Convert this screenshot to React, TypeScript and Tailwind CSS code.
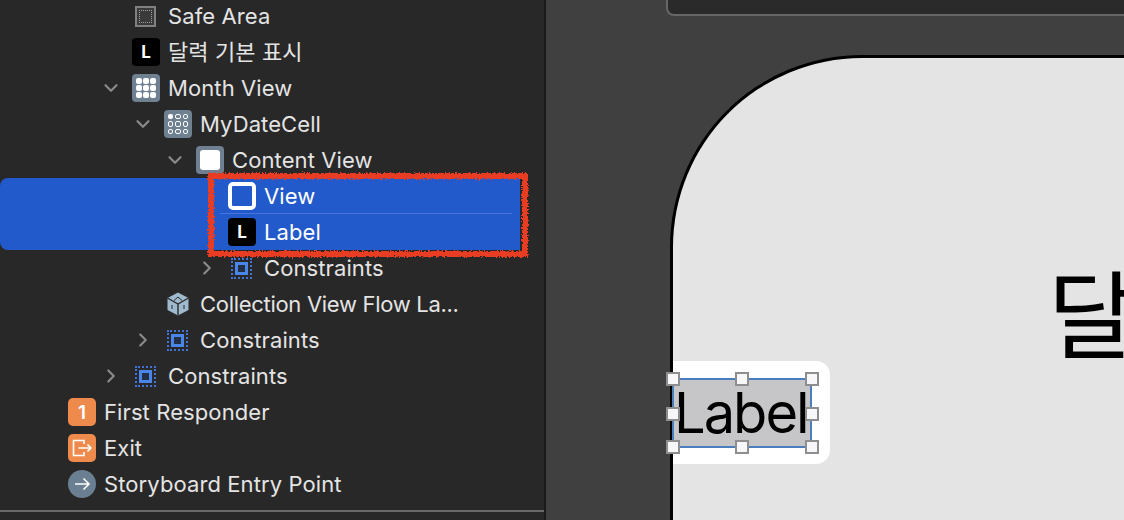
import { ChevronDown, ChevronRight } from "lucide-react";
import type { ReactNode } from "react";

const font = { fontFamily: 'Inter, "Noto Sans CJK KR", sans-serif' };

// small outline icons
const SafeAreaIcon = () => (
  <div className="w-[21px] h-[21px] mr-px border-2 border-[#808080] bg-[#3a3a3a] p-[2px]">
    <div className="w-full h-full border border-dotted border-[#a0a0a0]" />
  </div>
);

const ConstraintsIcon = () => (
  <div className="w-[21px] h-[21px] mr-[2px] border-2 border-dotted border-[#3f74d6] flex items-center justify-center">
    <div className="w-[13px] h-[13px] border-[3px] border-[#4a86ea] bg-[#222f45]" />
  </div>
);

const LabelIcon = () => (
  <div className="w-7 h-7 rounded-[4px] bg-black text-white flex items-center justify-center text-[17px] font-bold">
    L
  </div>
);

const MonthIcon = () => (
  <div className="w-7 h-7 rounded-[4px] bg-[#6f8191] p-1 grid grid-cols-3 gap-[1.5px]">
    {[0, 1, 2, 3, 4, 5, 6, 7, 8].map((i) => (
      <div key={i} className="bg-white rounded-[2px]" />
    ))}
  </div>
);

const CellIcon = () => (
  <div className="w-7 h-7 rounded-[4px] bg-[#6f8191] p-1 grid grid-cols-3 gap-[2px]">
    {[0, 1, 2, 3, 4, 5, 6, 7, 8].map((i) => (
      <div key={i} className={i < 1 ? "bg-white rounded-[2px]" : "border border-white rounded-[2px]"} />
    ))}
  </div>
);

const ContentIcon = () => (
  <div className="w-7 h-7 rounded-[4px] bg-[#6f8191] flex items-center justify-center">
    <div className="w-5 h-5 bg-white rounded-[3px]" />
  </div>
);

const ViewIcon = () => <div className="w-7 h-7 rounded-[5px] border-[4px] border-white" />;

const FlowIcon = () => (
  <svg width="24" height="24" viewBox="0 0 24 24">
    <path d="M12 0.5 22.5 6v12L12 23.5 1.5 18V6z" fill="#9fb9cd" />
    <path d="M1.5 6 12 12l10.5-6M12 12v11.5" stroke="#2a2a2a" strokeWidth="1.4" fill="none" />
    <path d="M8 8.5 12 5l4 3.5M6 13v4M18 13v4" stroke="#2a2a2a" strokeWidth="1" fill="none" />
  </svg>
);

const ResponderIcon = () => (
  <div className="w-7 h-7 rounded-[5px] bg-[#ee8b4c] text-white flex items-center justify-center text-[19px] font-semibold">
    1
  </div>
);

const ExitIcon = () => (
  <div className="w-7 h-7 rounded-[5px] bg-[#ee8b4c] flex items-center justify-center">
    <svg width="22" height="20" viewBox="0 0 22 20" fill="none" stroke="white" strokeWidth="1.6">
      <path d="M13 6V2.5H2.5v15H13V14" />
      <path d="M7.5 10H20M16.5 6.5 20 10l-3.5 3.5" />
    </svg>
  </div>
);

const EntryIcon = () => (
  <div className="w-7 h-7 rounded-full bg-[#6b7f92] flex items-center justify-center">
    <svg width="18" height="14" viewBox="0 0 18 14" fill="none" stroke="white" strokeWidth="1.6">
      <path d="M2 7h14M10.5 1.5 16 7l-5.5 5.5" />
    </svg>
  </div>
);

const Row = ({
  pad,
  toggle,
  icon,
  text,
  className,
  textClass,
}: {
  pad: string;
  toggle?: "open" | "closed";
  icon: ReactNode;
  text: string;
  className?: string;
  textClass?: string;
}) => (
  <div className={`flex items-center shrink-0 ${className ?? "h-9"} ${pad}`}>
    <div className="w-8 flex items-center justify-center text-[#8a8a8a] pr-[10px]">
      {toggle === "open" && <ChevronDown size={28} strokeWidth={2.4} />}
      {toggle === "closed" && <ChevronRight size={28} strokeWidth={2.4} />}
    </div>
    <div className="w-7 h-7 flex items-center justify-center shrink-0">{icon}</div>
    <span className={`ml-2 whitespace-nowrap ${textClass ?? ""}`}>{text}</span>
  </div>
);

const Outline = () => (
  <div className="w-[544px] shrink-0 h-full bg-[#282828] relative overflow-hidden flex flex-col text-[22px] leading-none text-[#e4e4e4] tracking-[0.1px]">
    <div className="-mt-[2px]" />
    <Row pad="pl-[100px]" icon={<SafeAreaIcon />} text="Safe Area" />
    <Row pad="pl-[100px]" icon={<LabelIcon />} text="달력 기본 표시" />
    <Row pad="pl-[100px]" toggle="open" icon={<MonthIcon />} text="Month View" />
    <Row pad="pl-[132px]" toggle="open" icon={<CellIcon />} text="MyDateCell" />
    <Row pad="pl-[164px]" toggle="open" icon={<ContentIcon />} text="Content View" />
    <div className="w-[520px] h-[72px] shrink-0 bg-[#2259cb] rounded-l-lg text-white flex flex-col">
      <Row pad="pl-[196px]" className="h-[35px]" icon={<ViewIcon />} text="View" />
      <div className="h-px ml-[220px] w-[292px] bg-[#4a72dc]" />
      <Row pad="pl-[196px]" icon={<LabelIcon />} text="Label" />
    </div>
    <Row pad="pl-[196px]" toggle="closed" icon={<ConstraintsIcon />} text="Constraints" />
    <Row
      pad="pl-[132px]"
      icon={<FlowIcon />}
      text="Collection View Flow La..."
      textClass="tracking-[-0.3px]"
    />
    <Row pad="pl-[132px]" toggle="closed" icon={<ConstraintsIcon />} text="Constraints" />
    <Row pad="pl-[100px]" toggle="closed" icon={<ConstraintsIcon />} text="Constraints" />
    <Row pad="pl-9" icon={<ResponderIcon />} text="First Responder" />
    <Row pad="pl-9" icon={<ExitIcon />} text="Exit" />
    <Row pad="pl-9" icon={<EntryIcon />} text="Storyboard Entry Point" />
    <div className="mt-[8px] h-[2px] bg-[#6a6a6a]" />
  </div>
);

// hand drawn red annotation around the selected rows
const Annotation = () => (
  <svg className="absolute left-[204px] top-[168px]" width="328" height="94" viewBox="0 0 328 94">
    <defs>
      <filter id="rough" x="-5%" y="-10%" width="110%" height="120%">
        <feTurbulence type="fractalNoise" baseFrequency="0.6" numOctaves="2" seed="4" />
        <feDisplacementMap in="SourceGraphic" scale="5" />
      </filter>
    </defs>
    <rect x="7" y="8" width="314" height="78" fill="none" stroke="#e83c20" strokeWidth="6" filter="url(#rough)" />
  </svg>
);

const Handle = ({ pos }: { pos: string }) => (
  <div className={`absolute w-[14px] h-[14px] bg-[#f7f7f9] border-2 border-[#8e8e8e] ${pos}`} />
);

const Canvas = () => (
  <div className="flex-1 h-full bg-[#404040] border-l-2 border-[#1b1b1b] flex flex-col overflow-hidden">
    <div className="ml-[120px] h-[16px] shrink-0 bg-[#2a2a2a] border-l-2 border-b-2 border-[#666666] rounded-bl-[8px]" />
    <div className="mt-[39px] ml-[124px] flex-1 relative bg-[#e4e4e4] border-l-[3px] border-t-[3px] border-black rounded-tl-[192px] pt-[303px]">
      <div className="w-[157px] h-[103px] bg-white rounded-r-[14px] pt-[17px]">
        <div className="relative -ml-px w-[140px] h-[70px] bg-[#c6c6c8] border-2 border-[#4a7fbd] flex items-center text-[56px] leading-none text-black tracking-[-2px]">
          Label
          <Handle pos="-left-[8px] -top-[8px]" />
          <Handle pos="left-[61px] -top-[8px]" />
          <Handle pos="-right-[9px] -top-[8px]" />
          <Handle pos="-left-[8px] top-[27px]" />
          <Handle pos="-right-[9px] top-[27px]" />
          <Handle pos="-left-[8px] -bottom-[8px]" />
          <Handle pos="left-[61px] -bottom-[8px]" />
          <Handle pos="-right-[9px] -bottom-[8px]" />
        </div>
      </div>
      <span className="absolute left-[375px] top-[210px] text-[96px] leading-none text-black whitespace-nowrap">
        달력
      </span>
    </div>
  </div>
);

export default function App() {
  return (
    <div className="w-[1124px] h-[520px] flex overflow-hidden relative" style={font}>
      <Outline />
      <Canvas />
      <Annotation />
    </div>
  );
}
